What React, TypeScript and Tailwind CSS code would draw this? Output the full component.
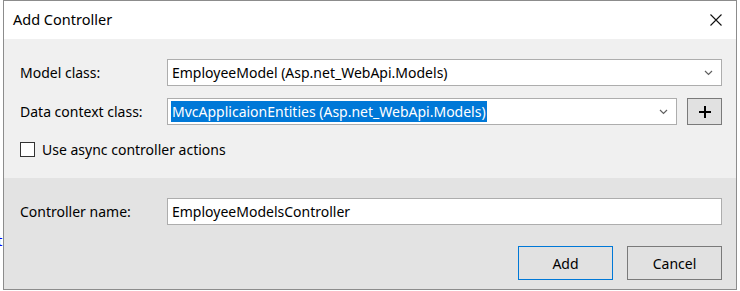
function Chevron() {
  return (
    <svg width="9" height="6" viewBox="0 0 9 6" className="shrink-0">
      <path d="M1 1 L4.5 4.5 L8 1" fill="none" stroke="#606060" strokeWidth="1.2" />
    </svg>
  );
}

export default function App() {
  return (
    <div
      className="relative w-[740px] h-[291px] bg-white overflow-hidden text-[14px] text-black"
      style={{ fontFamily: '"Noto Sans", "Open Sans", sans-serif' }}
    >
      {/* text behind the dialog */}
      <span className="absolute left-[-3px] top-[229px] text-[15px] text-[#0000ff]">t</span>

      <div className="relative ml-[3px] w-[734px] h-[290px] border border-[#8c8c8c] flex flex-col">
        {/* Title bar */}
        <div className="h-[38px] bg-white flex items-center justify-between pl-[9px] pr-[14px] shrink-0">
          <span className="text-[14.5px]">Add Controller</span>
          <svg width="12" height="12" viewBox="0 0 12 12">
            <path d="M0.5 0.5 L11.5 11.5 M11.5 0.5 L0.5 11.5" stroke="#111" strokeWidth="1.1" />
          </svg>
        </div>

        {/* Main section */}
        <div className="h-[139px] bg-[#f0f0f0] pt-[20px] pl-[16px] pr-[14px] flex flex-col shrink-0">
          <div className="flex items-center h-[27px]">
            <label className="w-[147px]">Model class:</label>
            <div className="flex-1 h-[27px] bg-white border border-[#adadad] flex items-center justify-between pl-[4px] pr-[8px]">
              <span>EmployeeModel (Asp.net_WebApi.Models)</span>
              <Chevron />
            </div>
          </div>

          <div className="flex items-center h-[27px] mt-[12px]">
            <label className="w-[147px]">Data context class:</label>
            <div className="w-[510px] h-[27px] bg-white border border-[#adadad] flex items-center justify-between pl-[3px] pr-[8px]">
              <span className="bg-[#0078d7] text-white px-[1px] leading-[21px]">
                MvcApplicaionEntities (Asp.net_WebApi.Models)
              </span>
              <Chevron />
            </div>
            <button className="ml-[10px] w-[35px] h-[27px] bg-[#e1e1e1] border border-[#7a7a7a] flex items-center justify-center">
              <svg width="14" height="14" viewBox="0 0 14 14">
                <path d="M7 1 V13 M1 7 H13" stroke="black" strokeWidth="2" />
              </svg>
            </button>
          </div>

          <div className="flex items-center mt-[14px] gap-[7px]">
            <div className="w-[15px] h-[15px] bg-white border border-[#333]" />
            <span>Use async controller actions</span>
          </div>
        </div>

        {/* Bottom section */}
        <div className="flex-1 bg-[#e3e3e3] pt-[20px] pl-[16px] pr-[14px] flex flex-col">
          <div className="flex items-center h-[27px]">
            <label className="w-[147px]">Controller name:</label>
            <div className="flex-1 h-[27px] bg-white border border-[#adadad] flex items-center pl-[4px]">
              <span>EmployeeModelsController</span>
            </div>
          </div>

          <div className="flex justify-end gap-[14px] mt-[21px]">
            <button className="w-[95px] h-[34px] bg-[#e1e1e1] border border-[#0078d7]">Add</button>
            <button className="w-[95px] h-[34px] bg-[#e1e1e1] border border-[#7a7a7a]">Cancel</button>
          </div>
        </div>
      </div>
    </div>
  );
}
